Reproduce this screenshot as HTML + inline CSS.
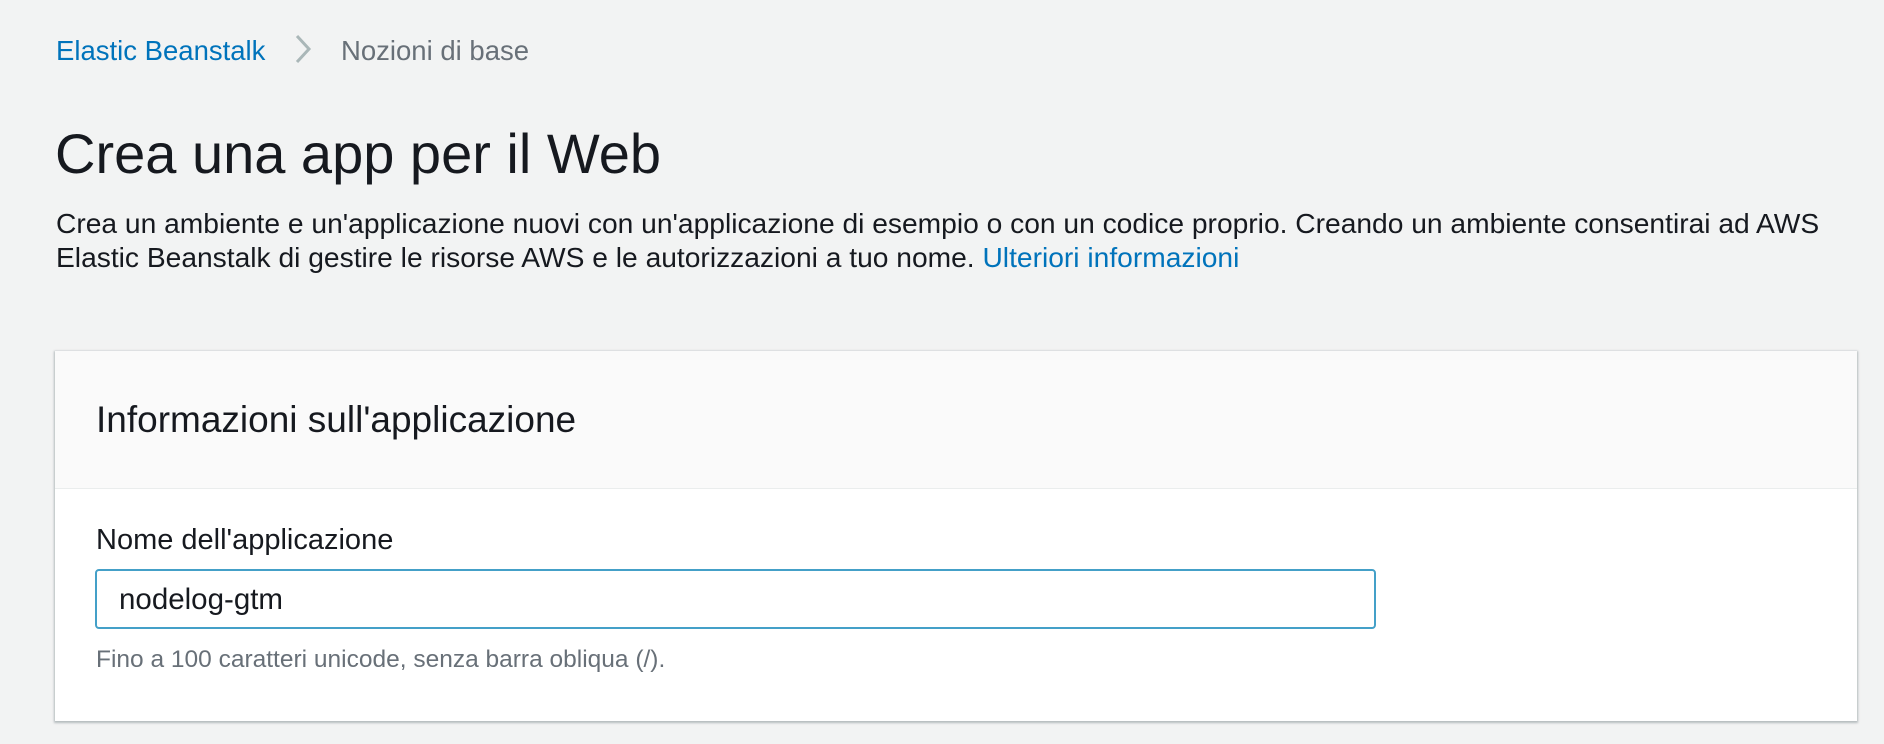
<!DOCTYPE html>
<html><head><meta charset="utf-8"><style>
html,body{margin:0;padding:0;background:#f2f3f3;width:1884px;height:744px;overflow:hidden;font-family:"Liberation Sans",sans-serif;color:#16191f}
.a{position:absolute;white-space:nowrap}
.bc{font-size:27.5px;line-height:27.5px;top:37px}
h1{position:absolute;margin:0;left:55px;top:126px;font-size:56px;font-weight:400;line-height:56px}
.desc{left:56px;top:206px;font-size:28.2px;line-height:34px}
.card{position:absolute;left:55px;top:351px;width:1802px;height:370px;background:#fff;box-shadow:0 1px 2px 1px rgba(0,28,36,.25)}
.hd{height:137px;background:#fafafa;border-bottom:1px solid #eaeded}
</style></head><body>
<div class="a bc" style="left:56px;color:#0073bb">Elastic Beanstalk</div>
<svg class="a" style="left:293px;top:34px" width="22" height="30"><path d="M4 2 L16 15 L4 28" fill="none" stroke="#aab7b8" stroke-width="3"/></svg>
<div class="a bc" style="left:341px;color:#687078">Nozioni di base</div>
<h1>Crea una app per il Web</h1>
<div class="a desc">Crea un ambiente e un'applicazione nuovi con un'applicazione di esempio o con un codice proprio. Creando un ambiente consentirai ad AWS<br>Elastic Beanstalk di gestire le risorse AWS e le autorizzazioni a tuo nome. <span style="color:#0073bb">Ulteriori informazioni</span></div>
<div class="card"><div class="hd"></div>
<div class="a" style="left:41px;top:50px;font-size:37px;line-height:37px">Informazioni sull'applicazione</div>
<div class="a" style="left:41px;top:175px;font-size:29px;line-height:29px">Nome dell'applicazione</div>
<div class="a" style="left:40px;top:218px;width:1277px;height:56px;border:2.5px solid #44a0c8;border-radius:4px"></div>
<div class="a" style="left:64px;top:234px;font-size:29.5px;line-height:29.5px">nodelog-gtm</div>
<div class="a" style="left:41px;top:297px;font-size:24.5px;line-height:24.5px;color:#687078">Fino a 100 caratteri unicode, senza barra obliqua (/).</div>
</div>
</body></html>
